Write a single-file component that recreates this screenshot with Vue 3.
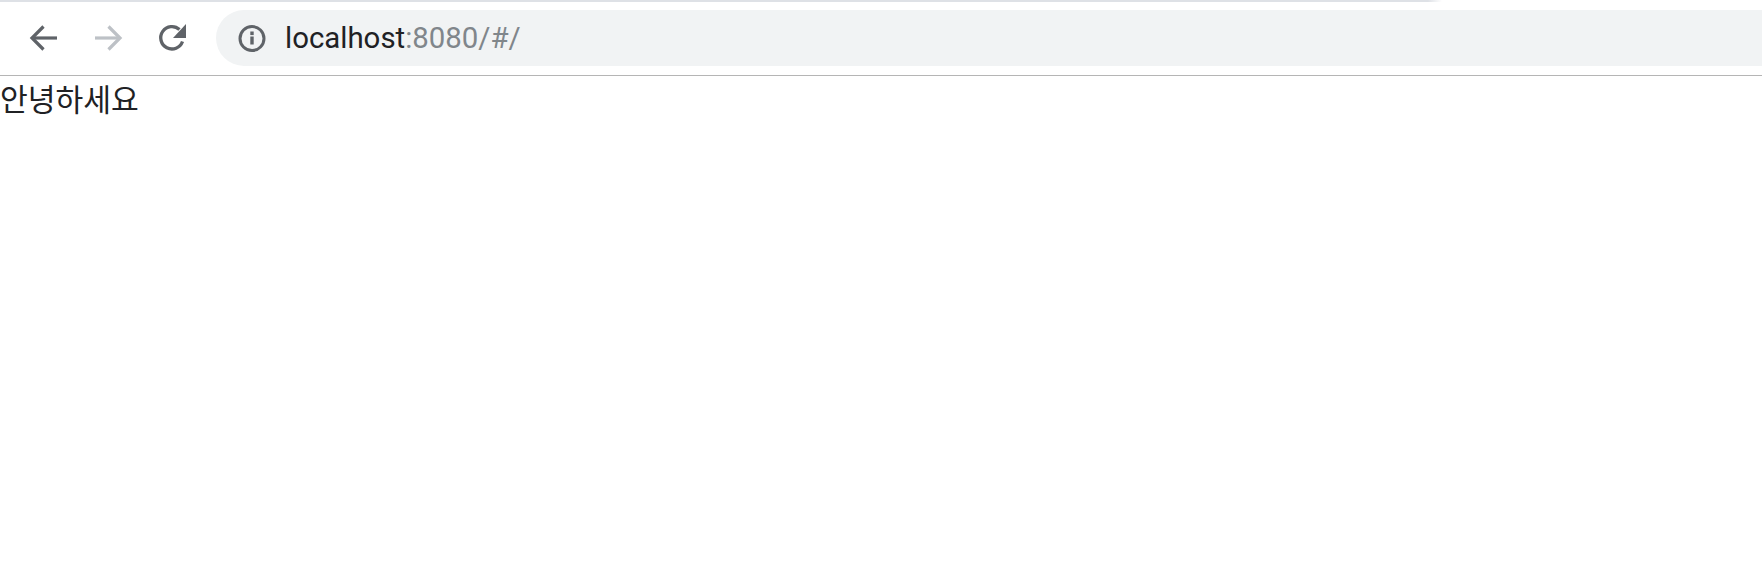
<script setup>
const host = 'localhost'
const rest = ':8080/#/'
</script>

<template>
  <div class="page">
    <div class="tab-strip"></div>
    <header class="toolbar">
      <div class="nav">
        <button class="nav-btn">
          <svg width="32" height="32" viewBox="0 0 32 32" fill="none" stroke="#5f6368" stroke-width="3.200">
            <path d="M29 16H5"></path>
            <path d="M15.500 4.500 4 16l11.500 11.500"></path>
          </svg>
        </button>
        <button class="nav-btn">
          <svg width="32" height="32" viewBox="0 0 32 32" fill="none" stroke="#bdc1c6" stroke-width="3.200">
            <path d="M3 16h24"></path>
            <path d="M16.500 4.500 28 16 16.500 27.500"></path>
          </svg>
        </button>
        <button class="nav-btn">
          <svg width="32" height="32" viewBox="0 0 32 32" fill="none">
            <path d="M26.500 19.500A11.200 11.200 0 1 1 23.500 7.500" stroke="#5f6368" stroke-width="3.300"></path>
            <path d="M30 2v14H17z" fill="#5f6368"></path>
          </svg>
        </button>
      </div>
      <div class="omnibox">
        <svg class="info" width="28" height="28" viewBox="0 0 28 28" fill="none">
          <circle cx="14" cy="14.500" r="12" stroke="#5f6368" stroke-width="3"></circle>
          <rect x="12.300" y="12.500" width="3.400" height="8" fill="#5f6368"></rect>
          <rect x="12.300" y="7.500" width="3.400" height="3.600" fill="#5f6368"></rect>
        </svg>
        <span class="url"><span class="host">{{ host }}</span>{{ rest }}</span>
      </div>
    </header>
    <main class="content">안녕하세요</main>
  </div>
</template>

<style scoped>
.page {
  height: 566px;
  background: #fff;
  overflow: hidden;
}

.tab-strip {
  width: 1442px;
  height: 2px;
  background: linear-gradient(to right, #dee1e6 calc(100% - 14px), #fff);
}

.toolbar {
  height: 74px;
  box-sizing: border-box;
  padding-top: 8px;
  border-bottom: 1px solid #b5b5b5;
  display: flex;
  align-items: flex-start;
}

.nav {
  display: flex;
  flex: none;
  gap: 32px;
  padding: 12px 0 0 28px;
  width: 216px;
  box-sizing: border-box;
}

.nav-btn {
  background: none;
  border: none;
  padding: 0;
  width: 32px;
  height: 32px;
  display: flex;
}

.omnibox {
  flex: 1;
  height: 56px;
  background: #f1f3f4;
  border-radius: 28px 0 0 28px;
  display: flex;
  align-items: center;
  padding-left: 22px;
  gap: 19px;
}

.url {
  font-family: Roboto, "Liberation Sans", sans-serif;
  font-size: 29.400px;
  color: #80868b;
}

.host {
  color: #202124;
}

.content {
  font-family: "Noto Sans CJK KR", sans-serif;
  font-size: 30.200px;
  line-height: 44px;
  color: #202124;
}
</style>
